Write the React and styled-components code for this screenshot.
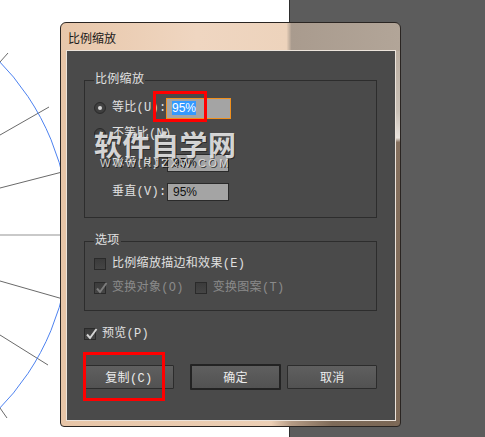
import React from 'react'
import styled, { createGlobalStyle } from 'styled-components'

const GlobalStyle = createGlobalStyle`
  html, body {
    margin: 0;
    padding: 0;
    background: #fff;
  }
  body {
    font-family: "Liberation Mono", "Noto Sans CJK SC", monospace;
  }
`

const Stage = styled.div`
  position: relative;
  width: 485px;
  height: 437px;
  overflow: hidden;
  display: grid;
  grid-template-columns: 290px 1fr;
`

const Canvas = styled.div`
  background: #fff;
  border-right: 1px solid #2e2e2e;
  svg { display: block; }
`

const Workspace = styled.div`
  background: #5c5c5c;
`

const Window = styled.div`
  position: absolute;
  left: 60px;
  top: 22px;
  width: 341px;
  height: 405px;
  box-sizing: border-box;
  border: 1px solid #2a2522;
  border-radius: 6px 6px 4px 4px;
  display: flex;
  flex-direction: column;
  background:
    linear-gradient(90deg, #e8c7aa 0%, #efd6c1 40%, #edd3bc 66.5%, #a99b8e 68%, #b2a598 100%) top / 100% 28px no-repeat,
    linear-gradient(180deg, #b1a497 0%, #c9c0b6 22%, #e8e2dc 28.5%, #85705e 29.6%, #7d6957 100%) right top / 6px 100% no-repeat,
    linear-gradient(90deg, #e7c5a7 0%, #eccfb5 62%, #b49a84 68%, #7e6a58 80%, #7b6755 100%);
`

const TitleBar = styled.div`
  height: 28px;
  flex: none;
  display: flex;
  align-items: center;
  padding-left: 7px;
  font-family: "Noto Sans CJK SC", sans-serif;
  font-size: 12px;
  color: #1a1a1a;
`

const Panel = styled.div`
  flex: 1;
  margin: 0 5px 6px 6px;
  background: #4a4a4a;
  box-shadow: 0 0 0 1px #ebe3db;
  padding: 0 18px 0 17px;
  display: flex;
  flex-direction: column;
  color: #e0e0e0;
  font-size: 12px;
  letter-spacing: 0.3px;
`

const Group = styled.div`
  position: relative;
  box-sizing: border-box;
  height: ${p => p.$h}px;
  margin-top: ${p => p.$mt}px;
  border: 1px solid #2d2d2d;
  padding: ${p => p.$pad};
  display: grid;
  grid-template-rows: ${p => p.$rows};
  row-gap: ${p => p.$gap || 0}px;
`

const GroupTitle = styled.span`
  position: absolute;
  top: -8px;
  left: 9px;
  padding: 0 1px;
  background: #4a4a4a;
  line-height: 14px;
`

const FieldRow = styled.div`
  display: grid;
  grid-template-columns: 18px 55px auto;
  align-items: center;
`

const Label = styled.span`
  white-space: nowrap;
  color: ${p => (p.$disabled ? '#8a8a8a' : '#e0e0e0')};
  line-height: 14px;
`

const Radio = styled.span`
  width: 12px;
  height: 12px;
  box-sizing: border-box;
  border-radius: 50%;
  border: 1px solid #2a2a2a;
  background: radial-gradient(circle at 50% 40%, #474747, #383838);
  display: flex;
  align-items: center;
  justify-content: center;
  &::after {
    content: '';
    width: 4px;
    height: 4px;
    border-radius: 50%;
    background: ${p => (p.$on ? '#d6d6d6' : 'transparent')};
  }
`

const Field = styled.div`
  box-sizing: border-box;
  width: ${p => (p.$focus ? 65 : 62)}px;
  height: ${p => (p.$focus ? 21 : 18)}px;
  margin-left: ${p => (p.$focus ? -1 : 0)}px;
  border: 1px solid ${p => (p.$focus ? '#f0901e' : '#2a2a2a')};
  background: #a4a4a4;
  padding-left: 5px;
  display: flex;
  align-items: center;
  font-family: "Liberation Sans", sans-serif;
  font-size: 12px;
  letter-spacing: 0;
  color: #111;
`

const Selected = styled.span`
  background: #3399ff;
  color: #fff;
  line-height: 14px;
`

const CheckRow = styled.div`
  display: flex;
  align-items: center;
  gap: 11px;
`

const CheckItem = styled.label`
  display: flex;
  align-items: center;
  gap: 6px;
`

const Box = styled.span`
  width: 12px;
  height: 12px;
  flex: none;
  box-sizing: border-box;
  border: 1px solid #2a2a2a;
  background: linear-gradient(#3b3b3b, #454545);
  position: relative;
  svg {
    position: absolute;
    left: 0;
    top: -2px;
  }
`

const Preview = styled.div`
  margin-top: 13px;
  height: 20px;
  display: flex;
  align-items: center;
`

const Buttons = styled.div`
  margin-top: 20px;
  height: 26px;
  display: flex;
  align-items: center;
`

const Button = styled.button`
  box-sizing: border-box;
  width: ${p => (p.$default ? 92 : 90)}px;
  height: ${p => (p.$default ? 26 : 24)}px;
  margin-left: ${p => p.$ml || 0}px;
  border: ${p => (p.$default ? '2px solid #232323' : '1px solid #2c2c2c')};
  border-radius: 1px;
  background: linear-gradient(#5f5f5f, #525252);
  color: #ececec;
  font-family: "Liberation Mono", "Noto Sans CJK SC", monospace;
  font-size: 12px;
  letter-spacing: 0.3px;
  padding: 0;
`

const Annotation = styled.div`
  position: absolute;
  left: ${p => p.$x}px;
  top: ${p => p.$y}px;
  width: ${p => p.$w}px;
  height: ${p => p.$h}px;
  box-sizing: border-box;
  border: 3px solid #ff0000;
`

const Watermark = styled.div`
  position: absolute;
  left: 94px;
  top: 129px;
  pointer-events: none;
`

const WatermarkTitle = styled.div`
  font-family: "Noto Sans CJK SC", sans-serif;
  font-weight: bold;
  font-size: 28px;
  line-height: 30px;
  letter-spacing: 0.5px;
  color: rgba(236, 236, 236, 0.9);
  text-shadow: 1px 1px 0 rgba(30, 30, 30, 0.7);
`

const WatermarkUrl = styled.div`
  margin-top: -1px;
  padding-left: 6px;
  font-family: "Liberation Sans", sans-serif;
  font-size: 11px;
  line-height: 10px;
  letter-spacing: 2.4px;
  color: rgba(225, 225, 225, 0.9);
  text-shadow: 1px 1px 0 rgba(20, 20, 20, 0.8);
`

const Tick = ({ color }) => (
  <svg width="13" height="14" viewBox="0 0 13 14">
    <path d="M2 7.5 L5 11 L11.5 2" fill="none" stroke={color} strokeWidth="2" />
  </svg>
)

const Check = ({ on, disabled }) => (
  <Box>{on && <Tick color={disabled ? '#7c7c7c' : '#d4d4d4'} />}</Box>
)

const Drawing = () => (
  <svg width="289" height="437">
    <g stroke="#6a6a6a" strokeWidth="1">
      <line x1="0" y1="62" x2="8" y2="53" />
      <line x1="0" y1="135" x2="49" y2="107" />
      <line x1="0" y1="188" x2="70" y2="170" />
      <line x1="0" y1="281" x2="70" y2="301" />
      <line x1="0" y1="335" x2="48" y2="365" />
      <line x1="0" y1="408" x2="7" y2="418" />
    </g>
    <line x1="0" y1="235" x2="70" y2="235" stroke="#c9c9c9" strokeWidth="2" />
    <circle cx="-179" cy="235" r="249" fill="none" stroke="#4d82f0" strokeWidth="1" />
  </svg>
)

export default function App() {
  return (
    <>
      <GlobalStyle />
      <Stage>
        <Canvas>
          <Drawing />
        </Canvas>
        <Workspace />

        <Window>
          <TitleBar>比例缩放</TitleBar>
          <Panel>
            <Group $h={138} $mt={29} $pad="16px 0 0 9px" $rows="22px 30px 28px 30px">
              <GroupTitle>比例缩放</GroupTitle>
              <FieldRow>
                <Radio $on />
                <Label>等比(U):</Label>
                <Field $focus><Selected>95%</Selected></Field>
              </FieldRow>
              <FieldRow>
                <Radio />
                <Label>不等比(N)</Label>
              </FieldRow>
              <FieldRow>
                <span />
                <Label>水平(H):</Label>
                <Field>95%</Field>
              </FieldRow>
              <FieldRow>
                <span />
                <Label>垂直(V):</Label>
                <Field>95%</Field>
              </FieldRow>
            </Group>

            <Group $h={70} $mt={23} $pad="12px 0 0 9px" $rows="20px 20px" $gap={4}>
              <GroupTitle>选项</GroupTitle>
              <CheckRow>
                <CheckItem>
                  <Check />
                  <Label>比例缩放描边和效果(E)</Label>
                </CheckItem>
              </CheckRow>
              <CheckRow>
                <CheckItem>
                  <Check on disabled />
                  <Label $disabled>变换对象(O)</Label>
                </CheckItem>
                <CheckItem>
                  <Check disabled />
                  <Label $disabled>变换图案(T)</Label>
                </CheckItem>
              </CheckRow>
            </Group>

            <Preview>
              <CheckItem>
                <Check on />
                <Label>预览(P)</Label>
              </CheckItem>
            </Preview>

            <Buttons>
              <Button>复制(C)</Button>
              <Button $default $ml={16}>确定</Button>
              <Button $ml={6}>取消</Button>
            </Buttons>
          </Panel>
        </Window>

        <Watermark>
          <WatermarkTitle>软件自学网</WatermarkTitle>
          <WatermarkUrl>WWW.RJZXW.COM</WatermarkUrl>
        </Watermark>

        <Annotation $x={153} $y={91} $w={54} $h={31} />
        <Annotation $x={83} $y={352} $w={82} $h={49} />
      </Stage>
    </>
  )
}
